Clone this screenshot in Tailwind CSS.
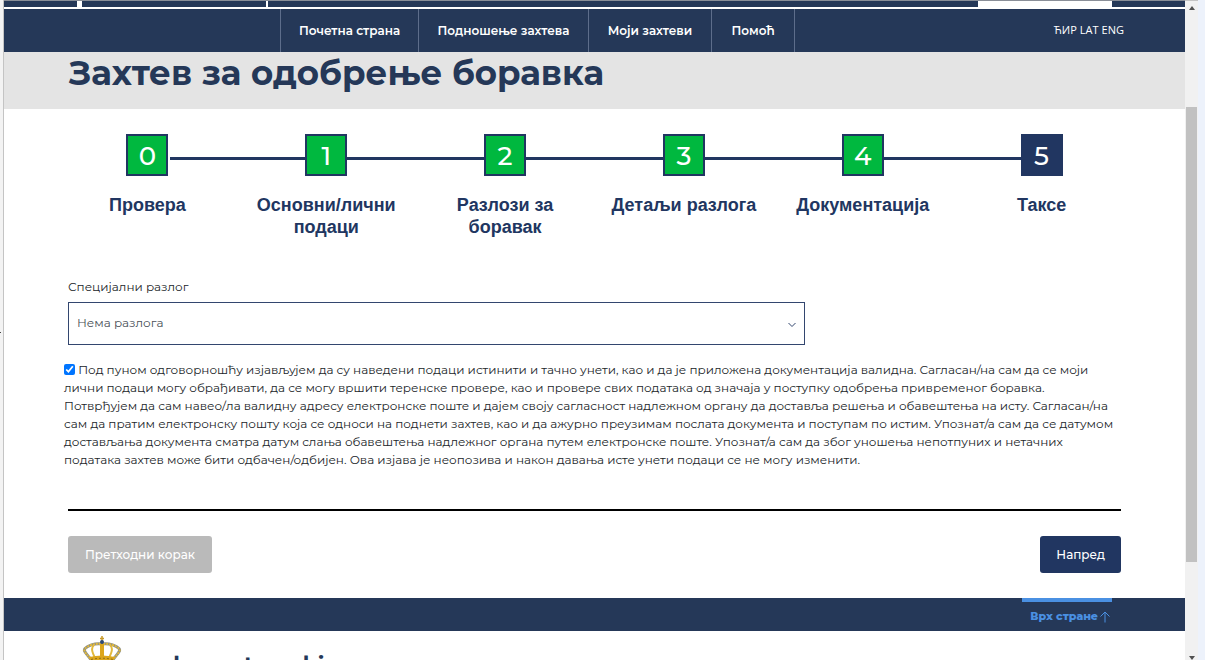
<!DOCTYPE html>
<html lang="sr">
<head>
<meta charset="utf-8">
<meta name="viewport" content="width=device-width, initial-scale=1">
<title>Захтев за одобрење боравка</title>
<script src="https://cdn.jsdelivr.net/npm/@tailwindcss/browser@4"></script>
</head>
<body class="flex h-screen overflow-hidden bg-white font-['Montserrat','Inter','Noto_Sans',sans-serif] text-[#212529] [font-feature-settings:'locl'_0]">
  <!-- left window edge -->
  <div class="flex w-1 shrink-0 flex-col justify-center border-r border-[#c4c4c4] bg-[#f3f3f3]"><span class="mt-1 h-px w-px bg-[#444]"></span></div>

  <div class="flex min-w-0 flex-1 flex-col overflow-hidden">
    <!-- bottom edge of the upper banner -->
    <div class="flex h-[7px] shrink-0 border-t border-[#8a8f98]">
      <div class="w-[73px] bg-[#253858]"></div>
      <div class="ml-[5px] w-[184px] bg-[#253858]"></div>
      <div class="ml-[2px] flex-1 bg-[#253858]"></div>
      <div class="w-[134px]"></div>
      <div class="w-[73px] bg-[#253858]"></div>
    </div>

    <header class="mt-[2px] flex h-[43px] shrink-0 items-stretch bg-[#253858] text-white">
      <nav class="ml-[276px] flex items-stretch border-l border-[#5d6d8b] text-[12px] font-semibold">
        <a href="#" class="flex w-[138px] items-center justify-center border-r border-[#5d6d8b]">Почетна страна</a>
        <a href="#" class="flex w-[170px] items-center justify-center border-r border-[#5d6d8b]">Подношење захтева</a>
        <a href="#" class="flex w-[123px] items-center justify-center border-r border-[#5d6d8b]">Моји захтеви</a>
        <a href="#" class="flex w-[83px] items-center justify-center border-r border-[#5d6d8b]">Помоћ</a>
      </nav>
      <div class="mr-[61px] ml-auto flex items-center gap-[3px] font-['Open_Sans',sans-serif] text-[11px]">
        <a href="#">ЋИР</a><a href="#">LAT</a><a href="#">ENG</a>
      </div>
    </header>

    <div class="h-[57px] shrink-0 bg-[#e4e4e4] px-[65px]">
      <h1 class="text-[34px] leading-[42px] font-bold whitespace-nowrap text-[#253858]">Захтев за одобрење боравка</h1>
    </div>

    <main class="shrink-0 px-[64px] pt-[25px]">
      <ol class="-mx-[10px] grid grid-cols-6 text-center text-[#213661]">
        <li class="flex flex-col items-center">
          <div class="flex w-full items-center">
            <span class="mr-[2px] flex-1"></span>
            <span class="flex size-[42px] items-center justify-center border-2 border-[#213661] bg-[#00b83f] pt-[2px] text-[26px] font-medium text-white">0</span>
            <span class="mt-[7px] ml-[2px] h-[3px] flex-1 bg-[#213661]"></span>
          </div>
          <span class="mt-[18px] font-['Liberation_Sans',sans-serif] text-[18px] leading-[22px] font-bold">Провера</span>
        </li>
        <li class="flex flex-col items-center">
          <div class="flex w-full items-center">
            <span class="mt-[7px] h-[3px] flex-1 bg-[#213661]"></span>
            <span class="flex size-[42px] items-center justify-center border-2 border-[#213661] bg-[#00b83f] pt-[2px] text-[26px] font-medium text-white">1</span>
            <span class="mt-[7px] h-[3px] flex-1 bg-[#213661]"></span>
          </div>
          <span class="mt-[18px] font-['Liberation_Sans',sans-serif] text-[18px] leading-[22px] font-bold">Основни/лични<br>подаци</span>
        </li>
        <li class="flex flex-col items-center">
          <div class="flex w-full items-center">
            <span class="mt-[7px] h-[3px] flex-1 bg-[#213661]"></span>
            <span class="flex size-[42px] items-center justify-center border-2 border-[#213661] bg-[#00b83f] pt-[2px] text-[26px] font-medium text-white">2</span>
            <span class="mt-[7px] h-[3px] flex-1 bg-[#213661]"></span>
          </div>
          <span class="mt-[18px] font-['Liberation_Sans',sans-serif] text-[18px] leading-[22px] font-bold">Разлози за<br>боравак</span>
        </li>
        <li class="flex flex-col items-center">
          <div class="flex w-full items-center">
            <span class="mt-[7px] h-[3px] flex-1 bg-[#213661]"></span>
            <span class="flex size-[42px] items-center justify-center border-2 border-[#213661] bg-[#00b83f] pt-[2px] text-[26px] font-medium text-white">3</span>
            <span class="mt-[7px] h-[3px] flex-1 bg-[#213661]"></span>
          </div>
          <span class="mt-[18px] font-['Liberation_Sans',sans-serif] text-[18px] leading-[22px] font-bold">Детаљи разлога</span>
        </li>
        <li class="flex flex-col items-center">
          <div class="flex w-full items-center">
            <span class="mt-[7px] h-[3px] flex-1 bg-[#213661]"></span>
            <span class="flex size-[42px] items-center justify-center border-2 border-[#213661] bg-[#00b83f] pt-[2px] text-[26px] font-medium text-white">4</span>
            <span class="mt-[7px] h-[3px] flex-1 bg-[#213661]"></span>
          </div>
          <span class="mt-[18px] font-['Liberation_Sans',sans-serif] text-[18px] leading-[22px] font-bold">Документација</span>
        </li>
        <li class="flex flex-col items-center" aria-current="step">
          <div class="flex w-full items-center">
            <span class="mt-[7px] h-[3px] flex-1 bg-[#213661]"></span>
            <span class="flex size-[42px] items-center justify-center border-2 border-[#213661] bg-[#213661] pt-[2px] text-[26px] font-medium text-white">5</span>
            <span class="flex-1"></span>
          </div>
          <span class="mt-[18px] font-['Liberation_Sans',sans-serif] text-[18px] leading-[22px] font-bold">Таксе</span>
        </li>
      </ol>

      <form>
        <label for="reason" class="mt-[39px] block text-[12px] leading-[20px]">Специјални разлог</label>
        <div class="relative mt-[5px] w-[70%]">
          <select id="reason" class="block h-[43px] w-full appearance-none rounded-none border border-[#33466f] bg-white px-2 pb-[2px] text-[12px] text-[#495057]">
            <option>Нема разлога</option>
          </select>
          <svg class="pointer-events-none absolute top-[20px] right-[9px] h-[6px] w-[8px]" viewBox="0 0 8 6" fill="none" stroke="#33466f" stroke-width="1"><path d="M.5 1 4 4.500 7.500 1"/></svg>
        </div>

        <div class="-mx-[4px] mt-[16px] text-[12px] leading-[18px] whitespace-nowrap">
          <input id="consent" type="checkbox" checked class="size-[11px] align-[-1px] accent-[#0075ff]">
          <label for="consent">Под пуном одговорношћу изјављујем да су наведени подаци истинити и тачно унети, као и да је приложена документација валидна. Сагласан/на сам да се моји<br>лични подаци могу обрађивати, да се могу вршити теренске провере, као и провере свих података од значаја у поступку одобрења привременог боравка.<br>Потврђујем да сам навео/ла валидну адресу електронске поште и дајем своју сагласност надлежном органу да доставља решења и обавештења на исту. Сагласан/на<br>сам да пратим електронску пошту која се односи на поднети захтев, као и да ажурно преузимам послата документа и поступам по истим. Упознат/а сам да се датумом<br>достављања документа сматра датум слања обавештења надлежног органа путем електронске поште. Упознат/а сам да због уношења непотпуних и нетачних<br>података захтев може бити одбачен/одбијен. Ова изјава је неопозива и након давања исте унети подаци се не могу изменити.</label>
        </div>

        <hr class="mt-[40px] border-t-2 border-black">

        <div class="flex justify-between py-[25px]">
          <button type="button" class="h-[37px] rounded-[3px] bg-[#bababa] px-[17px] text-[12px] font-medium text-white">Претходни корак</button>
          <button type="button" class="h-[37px] rounded-[3px] bg-[#213661] px-[16px] text-[12px] font-medium text-white">Напред</button>
        </div>
      </form>
    </main>

    <div class="flex h-[33px] shrink-0 justify-end bg-[#253858] pr-[73px]">
      <a href="#" class="flex w-[90px] items-center justify-end gap-[2px] border-t-4 border-[#4a90e2] pr-[2px] text-[11px] font-extrabold text-[#4a90e2]">Врх стране
        <svg class="h-[12px] w-[10px]" viewBox="0 0 10 12" fill="none" stroke="#4a90e2" stroke-width="1"><path d="M5 11.500V1M.5 5.500 5 1l4.500 4.500"/></svg>
      </a>
    </div>

    <footer class="flex h-[60px] shrink-0 items-start pl-[78px]">
      <svg class="mt-[5px] h-[50px] w-[40px] shrink-0" viewBox="0 0 40 50">
        <g fill="none" stroke="#8d9088" stroke-width="3">
          <path d="M10 25C6 19 .5 15 3 12.500S12 7 20 8M30 25C34 19 39.500 15 37 12.500S28 7 20 8"/>
        </g>
        <g fill="none" stroke="#e2b93b" stroke-width="2">
          <path d="M10 25C6 19 .5 15 3 12.500S12 7 20 8M30 25C34 19 39.500 15 37 12.500S28 7 20 8" stroke-dasharray="2 1"/>
          <path d="M14 24C11 18 8 12 12 9M26 24C29 18 32 12 28 9"/>
        </g>
        <path d="M18 8h4v14h-4z" fill="#dca61c"/>
        <path d="M20 0v5M18 2.500h4" stroke="#c79a2a" stroke-width="1.500"/>
        <circle cx="20" cy="6" r="2" fill="#2e4a75"/>
        <path d="M7 21q13-3 26 0l-2 5v24H9V26z" fill="#dca61c"/>
        <path d="M9 23.500q11-2.500 22 0" fill="none" stroke="#8d6c17" stroke-dasharray="2 2"/>
      </svg>
      <span class="mt-[18px] ml-[17px] text-[22px] leading-[32px] font-bold text-[#253858]">welcometoserbia</span>
    </footer>
  </div>

  <!-- scroll bar -->
  <div class="flex w-[13px] shrink-0 flex-col items-center border-t border-[#c4c4c4] bg-[#f1f1f1]" aria-hidden="true">
    <svg class="mt-[5px] h-[4px] w-[6px] shrink-0" viewBox="0 0 6 4"><path d="M3 0 6 4H0z" fill="#505050"/></svg>
    <div class="mt-[97px] w-[11px] flex-[455] bg-[#c1c1c1]"></div>
    <div class="flex-[94]"></div>
    <svg class="h-[4px] w-[6px] shrink-0" viewBox="0 0 6 4"><path d="M0 0H6L3 4z" fill="#505050"/></svg>
  </div>
  <div class="w-[7px] shrink-0 bg-[#edf2fb]"></div>
</body>
</html>
